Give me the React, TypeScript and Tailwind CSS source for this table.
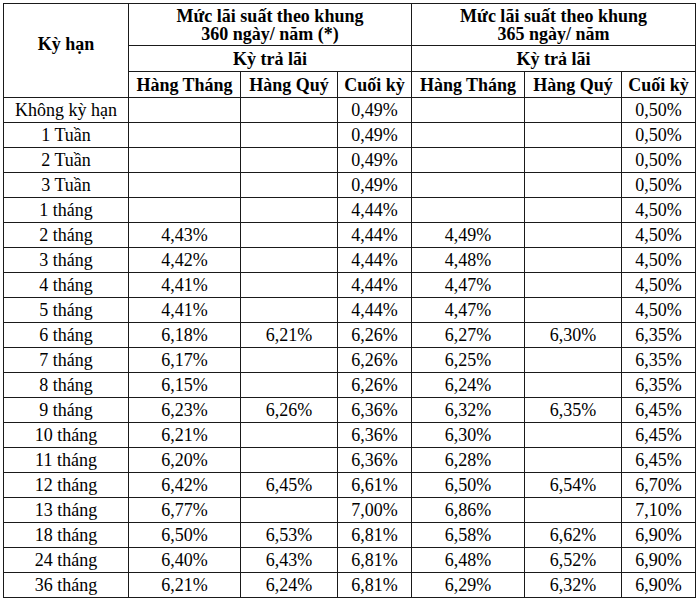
import React from 'react';

const rows: string[][] = [
  ['Không kỳ hạn', '', '', '0,49%', '', '', '0,50%'],
  ['1 Tuần', '', '', '0,49%', '', '', '0,50%'],
  ['2 Tuần', '', '', '0,49%', '', '', '0,50%'],
  ['3 Tuần', '', '', '0,49%', '', '', '0,50%'],
  ['1 tháng', '', '', '4,44%', '', '', '4,50%'],
  ['2 tháng', '4,43%', '', '4,44%', '4,49%', '', '4,50%'],
  ['3 tháng', '4,42%', '', '4,44%', '4,48%', '', '4,50%'],
  ['4 tháng', '4,41%', '', '4,44%', '4,47%', '', '4,50%'],
  ['5 tháng', '4,41%', '', '4,44%', '4,47%', '', '4,50%'],
  ['6 tháng', '6,18%', '6,21%', '6,26%', '6,27%', '6,30%', '6,35%'],
  ['7 tháng', '6,17%', '', '6,26%', '6,25%', '', '6,35%'],
  ['8 tháng', '6,15%', '', '6,26%', '6,24%', '', '6,35%'],
  ['9 tháng', '6,23%', '6,26%', '6,36%', '6,32%', '6,35%', '6,45%'],
  ['10 tháng', '6,21%', '', '6,36%', '6,30%', '', '6,45%'],
  ['11 tháng', '6,20%', '', '6,36%', '6,28%', '', '6,45%'],
  ['12 tháng', '6,42%', '6,45%', '6,61%', '6,50%', '6,54%', '6,70%'],
  ['13 tháng', '6,77%', '', '7,00%', '6,86%', '', '7,10%'],
  ['18 tháng', '6,50%', '6,53%', '6,81%', '6,58%', '6,62%', '6,90%'],
  ['24 tháng', '6,40%', '6,43%', '6,81%', '6,48%', '6,52%', '6,90%'],
  ['36 tháng', '6,21%', '6,24%', '6,81%', '6,29%', '6,32%', '6,90%'],
];

const cell = 'border border-[#1a1a1a] p-0 text-center align-middle';

const App = () => {
  return (
    <div className="min-h-[602px] bg-white pl-[3px] pt-[3px] font-['Liberation_Serif',serif] text-[18px] leading-[20px] text-black">
      <table className="w-[692px] table-fixed border-collapse">
        <colgroup>
          <col className="w-[125px]" />
          <col className="w-[112px]" />
          <col className="w-[97px]" />
          <col className="w-[74px]" />
          <col className="w-[113px]" />
          <col className="w-[97px]" />
          <col className="w-[74px]" />
        </colgroup>
        <thead className="font-bold">
          <tr className="h-[42px]">
            <th rowSpan={3} className={`${cell} pb-[14px]`}>
              Kỳ hạn
            </th>
            <th colSpan={3} className={`${cell} leading-[18px]`}>
              Mức lãi suất theo khung
              <br />
              360 ngày/ năm (*)
            </th>
            <th colSpan={3} className={`${cell} leading-[18px]`}>
              Mức lãi suất theo khung
              <br />
              365 ngày/ năm
            </th>
          </tr>
          <tr className="h-[26px]">
            <th colSpan={3} className={cell}>
              Kỳ trả lãi
            </th>
            <th colSpan={3} className={cell}>
              Kỳ trả lãi
            </th>
          </tr>
          <tr className="h-[26px]">
            <th className={cell}>Hàng Tháng</th>
            <th className={cell}>Hàng Quý</th>
            <th className={cell}>Cuối kỳ</th>
            <th className={cell}>Hàng Tháng</th>
            <th className={cell}>Hàng Quý</th>
            <th className={cell}>Cuối kỳ</th>
          </tr>
        </thead>
        <tbody>
          {rows.map((r) => (
            <tr key={r[0]} className="h-[25px]">
              {r.map((v, i) => (
                <td key={i} className={cell}>
                  {v}
                </td>
              ))}
            </tr>
          ))}
        </tbody>
      </table>
    </div>
  );
};

export default App;
